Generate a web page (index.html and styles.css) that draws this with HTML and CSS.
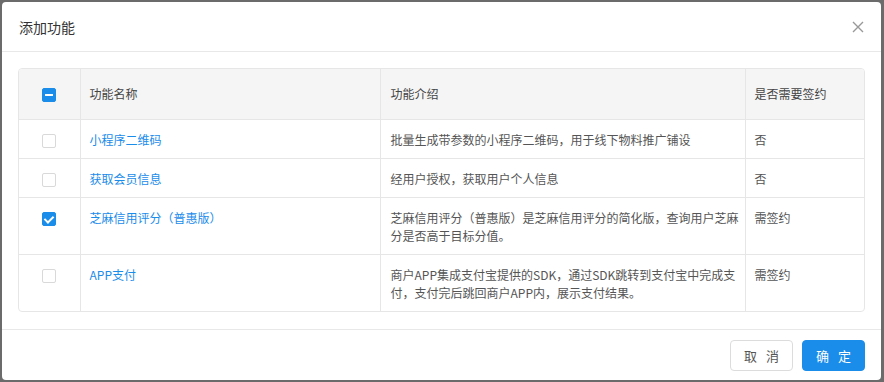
FILE: index.html
```html
<!DOCTYPE html>
<html lang="zh-CN">
<head>
    <meta charset="UTF-8"/>
    <title>添加功能</title>
    <link rel="stylesheet" href="styles.css">
</head>
<body>
<div class="overlay">
    <!-- ========== MODAL ========== -->
    <div class="modal">
        <div class="modal-header">
            <span class="modal-title">添加功能</span>
            <span class="modal-close">
                <svg width="12" height="12" viewBox="0 0 12 12">
                    <path d="M1 1 L11 11 M11 1 L1 11" stroke="#999" stroke-width="1.4" fill="none"/>
                </svg>
            </span>
        </div>

        <div class="modal-body">
            <div class="table-wrap">
                <table class="feature-table">
                    <colgroup>
                        <col class="col-check">
                        <col class="col-name">
                        <col class="col-desc">
                        <col class="col-sign">
                    </colgroup>
                    <thead>
                    <tr>
                        <th class="cell-check"><span class="checkbox indeterminate"></span></th>
                        <th>功能名称</th>
                        <th>功能介绍</th>
                        <th>是否需要签约</th>
                    </tr>
                    </thead>
                    <tbody>
                    <tr>
                        <td class="cell-check"><span class="checkbox"></span></td>
                        <td><a class="link">小程序二维码</a></td>
                        <td>批量生成带参数的小程序二维码，用于线下物料推广铺设</td>
                        <td>否</td>
                    </tr>
                    <tr>
                        <td class="cell-check"><span class="checkbox"></span></td>
                        <td><a class="link">获取会员信息</a></td>
                        <td>经用户授权，获取用户个人信息</td>
                        <td>否</td>
                    </tr>
                    <tr>
                        <td class="cell-check"><span class="checkbox checked"></span></td>
                        <td><a class="link">芝麻信用评分（普惠版）</a></td>
                        <td>芝麻信用评分（普惠版）是芝麻信用评分的简化版，查询用户芝麻分是否高于目标分值。</td>
                        <td>需签约</td>
                    </tr>
                    <tr>
                        <td class="cell-check"><span class="checkbox"></span></td>
                        <td><a class="link">APP支付</a></td>
                        <td>商户APP集成支付宝提供的SDK，通过SDK跳转到支付宝中完成支付，支付完后跳回商户APP内，展示支付结果。</td>
                        <td>需签约</td>
                    </tr>
                    </tbody>
                </table>
            </div>
        </div>

        <div class="modal-footer">
            <button class="btn">取 消</button>
            <button class="btn btn-primary">确 定</button>
        </div>
    </div>
</div>
</body>
</html>
```

FILE: styles.css
```css
/* ========== GLOBAL ========== */
body {
  margin: 0;
  padding: 0;
  background-color: #6b6b6b;
  font-family: "Noto Sans CJK SC", "Noto Sans", sans-serif;
  color: #555;
  font-size: 12px;
}

.overlay {
  width: 884px;
  height: 382px;
  padding: 2px 3px 2px 2px;
  box-sizing: border-box;
}

/* ========== MODAL ========== */
.modal {
  background-color: #fff;
  border-radius: 4px;
  width: 879px;
  height: 378px;
  display: flex;
  flex-direction: column;
  overflow: hidden;
}

.modal-header {
  flex-shrink: 0;
  height: 49px;
  border-bottom: 1px solid #e8e8e8;
  display: flex;
  align-items: center;
  justify-content: space-between;
  padding: 0 17px;
}
.modal-title {
  font-size: 14px;
  color: #333;
}
.modal-close {
  display: flex;
  align-items: center;
}

.modal-body {
  padding: 16px;
  flex: 1;
}

/* ========== TABLE ========== */
.table-wrap {
  border: 1px solid #e6e6e6;
  border-radius: 4px;
  overflow: hidden;
}
.feature-table {
  width: 100%;
  border-collapse: collapse;
  table-layout: fixed;
}
.col-check { width: 61px; }
.col-name { width: 300px; }
.col-desc { width: 365px; }

.feature-table th,
.feature-table td {
  text-align: left;
  vertical-align: top;
  line-height: 18px;
  padding: 11px 6px 9px 9px;
  border-right: 1px solid #e6e6e6;
  border-bottom: 1px solid #e6e6e6;
  font-weight: normal;
  color: #555;
}
.feature-table th:last-child,
.feature-table td:last-child {
  border-right: none;
}
.feature-table tbody tr:last-child td {
  border-bottom: none;
}
.feature-table th {
  background-color: #f5f5f5;
  padding-top: 16px;
  padding-bottom: 16px;
  color: #444;
}
.feature-table td:nth-child(3),
.feature-table th:nth-child(3) {
  padding-left: 10px;
}
.feature-table .cell-check {
  text-align: center;
  padding-left: 0;
  padding-right: 0;
}

.link {
  color: #1a8cea;
  cursor: pointer;
}

/* ========== CHECKBOX ========== */
.checkbox {
  display: inline-block;
  width: 12px;
  height: 12px;
  border: 1px solid #d9d9d9;
  border-radius: 2px;
  background-color: #fff;
  vertical-align: middle;
  position: relative;
  top: -1px;
}
.checkbox.checked,
.checkbox.indeterminate {
  background-color: #1a8cea;
  border-color: #1a8cea;
}
.checkbox.indeterminate::after {
  content: "";
  position: absolute;
  left: 2px;
  top: 5px;
  width: 8px;
  height: 2px;
  background-color: #fff;
}
.checkbox.checked::after {
  content: "";
  position: absolute;
  left: 3px;
  top: 1px;
  width: 4px;
  height: 7px;
  border: solid #fff;
  border-width: 0 2px 2px 0;
  transform: rotate(45deg);
}

/* ========== FOOTER ========== */
.modal-footer {
  flex-shrink: 0;
  border-top: 1px solid #e8e8e8;
  height: 51px;
  box-sizing: border-box;
  padding: 10px 16px;
  display: flex;
  justify-content: flex-end;
  align-items: flex-start;
  gap: 9px;
}
.btn {
  width: 63px;
  height: 31px;
  padding: 0 0 0 3px;
  border: 1px solid #dcdcdc;
  border-radius: 4px;
  background-color: #fff;
  color: #555;
  font-family: inherit;
  font-size: 13px;
  letter-spacing: 3px;
  cursor: pointer;
}
.btn-primary {
  background-color: #1a8cea;
  border-color: #1a8cea;
  color: #fff;
}
```
